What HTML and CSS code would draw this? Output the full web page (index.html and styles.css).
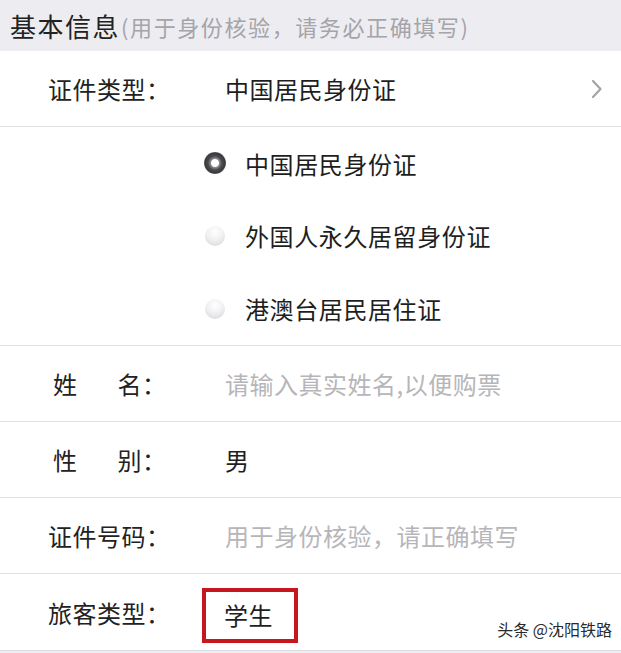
FILE: index.html
```html
<!DOCTYPE html>
<html lang="zh-CN">
<head>
<meta charset="utf-8">
<title>基本信息</title>
<link rel="stylesheet" href="styles.css">
</head>
<body>
<div class="page">
  <div class="section-header">
    <span class="title">基本信息</span><span class="subtitle">(用于身份核验，请务必正确填写)</span>
  </div>

  <div class="row">
    <div class="label">证件类型：</div>
    <div class="value">中国居民身份证</div>
    <svg class="chevron" width="12" height="20" viewBox="0 0 12 20"><path d="M2 2 L9.5 10 L2 18" fill="none" stroke="#a3a3a8" stroke-width="2.2" stroke-linecap="round" stroke-linejoin="round"/></svg>
  </div>

  <div class="radio-group">
    <div class="radio-item"><span class="radio checked"></span><span class="radio-text">中国居民身份证</span></div>
    <div class="radio-item"><span class="radio"></span><span class="radio-text">外国人永久居留身份证</span></div>
    <div class="radio-item"><span class="radio"></span><span class="radio-text">港澳台居民居住证</span></div>
  </div>

  <div class="row">
    <div class="label"><span class="spread-a">姓</span><span>名：</span></div>
    <div class="value placeholder">请输入真实姓名,以便购票</div>
  </div>

  <div class="row">
    <div class="label"><span class="spread-a">性</span><span>别：</span></div>
    <div class="value">男</div>
  </div>

  <div class="row">
    <div class="label">证件号码：</div>
    <div class="value placeholder">用于身份核验，请正确填写</div>
  </div>

  <div class="row last">
    <div class="label">旅客类型：</div>
    <div class="value"><span class="highlight">学生</span></div>
  </div>

  <div class="watermark">头条 @沈阳铁路</div>
</div>
</body>
</html>
```
FILE: styles.css
```css
html, body {
  margin: 0;
  padding: 0;
  background: #efeff3;
}
.page {
  position: relative;
  width: 621px;
  height: 653px;
  overflow: hidden;
  background: #efeff3;
  font-family: "Noto Sans CJK SC", "Noto Sans", sans-serif;
  color: #1e1e1e;
}
.section-header {
  height: 51px;
  display: flex;
  align-items: center;
  padding-left: 10px;
  background: #ededf1;
}
.title {
  font-size: 26px;
  color: #222;
  letter-spacing: 1.5px;
}
.subtitle {
  font-size: 22px;
  color: #a4a4aa;
  margin-left: 1px;
  letter-spacing: 1.6px;
}
.row {
  height: 75px;
  display: flex;
  align-items: center;
  background: #fff;
  border-bottom: 1px solid #e2e2e6;
  padding-left: 48px;
  position: relative;
}
.row.last {
  height: 76px;
  border-bottom: 1px solid #dcdce0;
}
.label {
  width: 177px;
  font-size: 24px;
  display: flex;
  flex-shrink: 0;
  color: #222;
  letter-spacing: 0.5px;
}
.spread-a {
  margin-left: 5px;
  margin-right: 40px;
}
.value {
  font-size: 24px;
  color: #1e1e1e;
  flex: 1;
  display: flex;
  align-items: center;
  letter-spacing: 0.5px;
}
.value.placeholder {
  color: #b6b6ba;
}
.chevron {
  margin-right: 18px;
}
.radio-group {
  background: #fff;
  border-bottom: 1px solid #e2e2e6;
  padding-left: 205px;
  display: flex;
  flex-direction: column;
}
.radio-item {
  height: 73px;
  display: flex;
  align-items: center;
}
.radio-item:first-child {
  height: 72px;
}
.radio {
  width: 20px;
  height: 20px;
  border-radius: 50%;
  background: radial-gradient(circle at 50% 30%, #ffffff 0%, #f1f1f3 45%, #d4d4d8 100%);
  margin-right: 20px;
  flex-shrink: 0;
}
.radio.checked {
  width: 22px;
  height: 22px;
  margin-left: -1px;
  margin-right: 19px;
  background: radial-gradient(circle, #ffffff 0, #ffffff 3.5px, #8c8c90 4.5px, #4a4a4e 7px, #3a3a3e 10px, #6a6a6e 11px);
}
.radio-text {
  font-size: 24px;
  color: #1e1e1e;
  letter-spacing: 0.6px;
}
.highlight {
  display: inline-block;
  margin-left: -23px;
  margin-top: 6px;
  height: 47px;
  border: 4px solid #c7161e;
  line-height: 46px;
  padding-left: 18px;
  box-sizing: content-box;
  width: 70px;
  letter-spacing: 0.5px;
  color: #1e1e1e;
}
.watermark {
  position: absolute;
  right: 9px;
  bottom: 12px;
  font-size: 16px;
  color: #2a2a2a;
  text-shadow: 0 0 2px #fff, 0 0 2px #fff;
}
```
